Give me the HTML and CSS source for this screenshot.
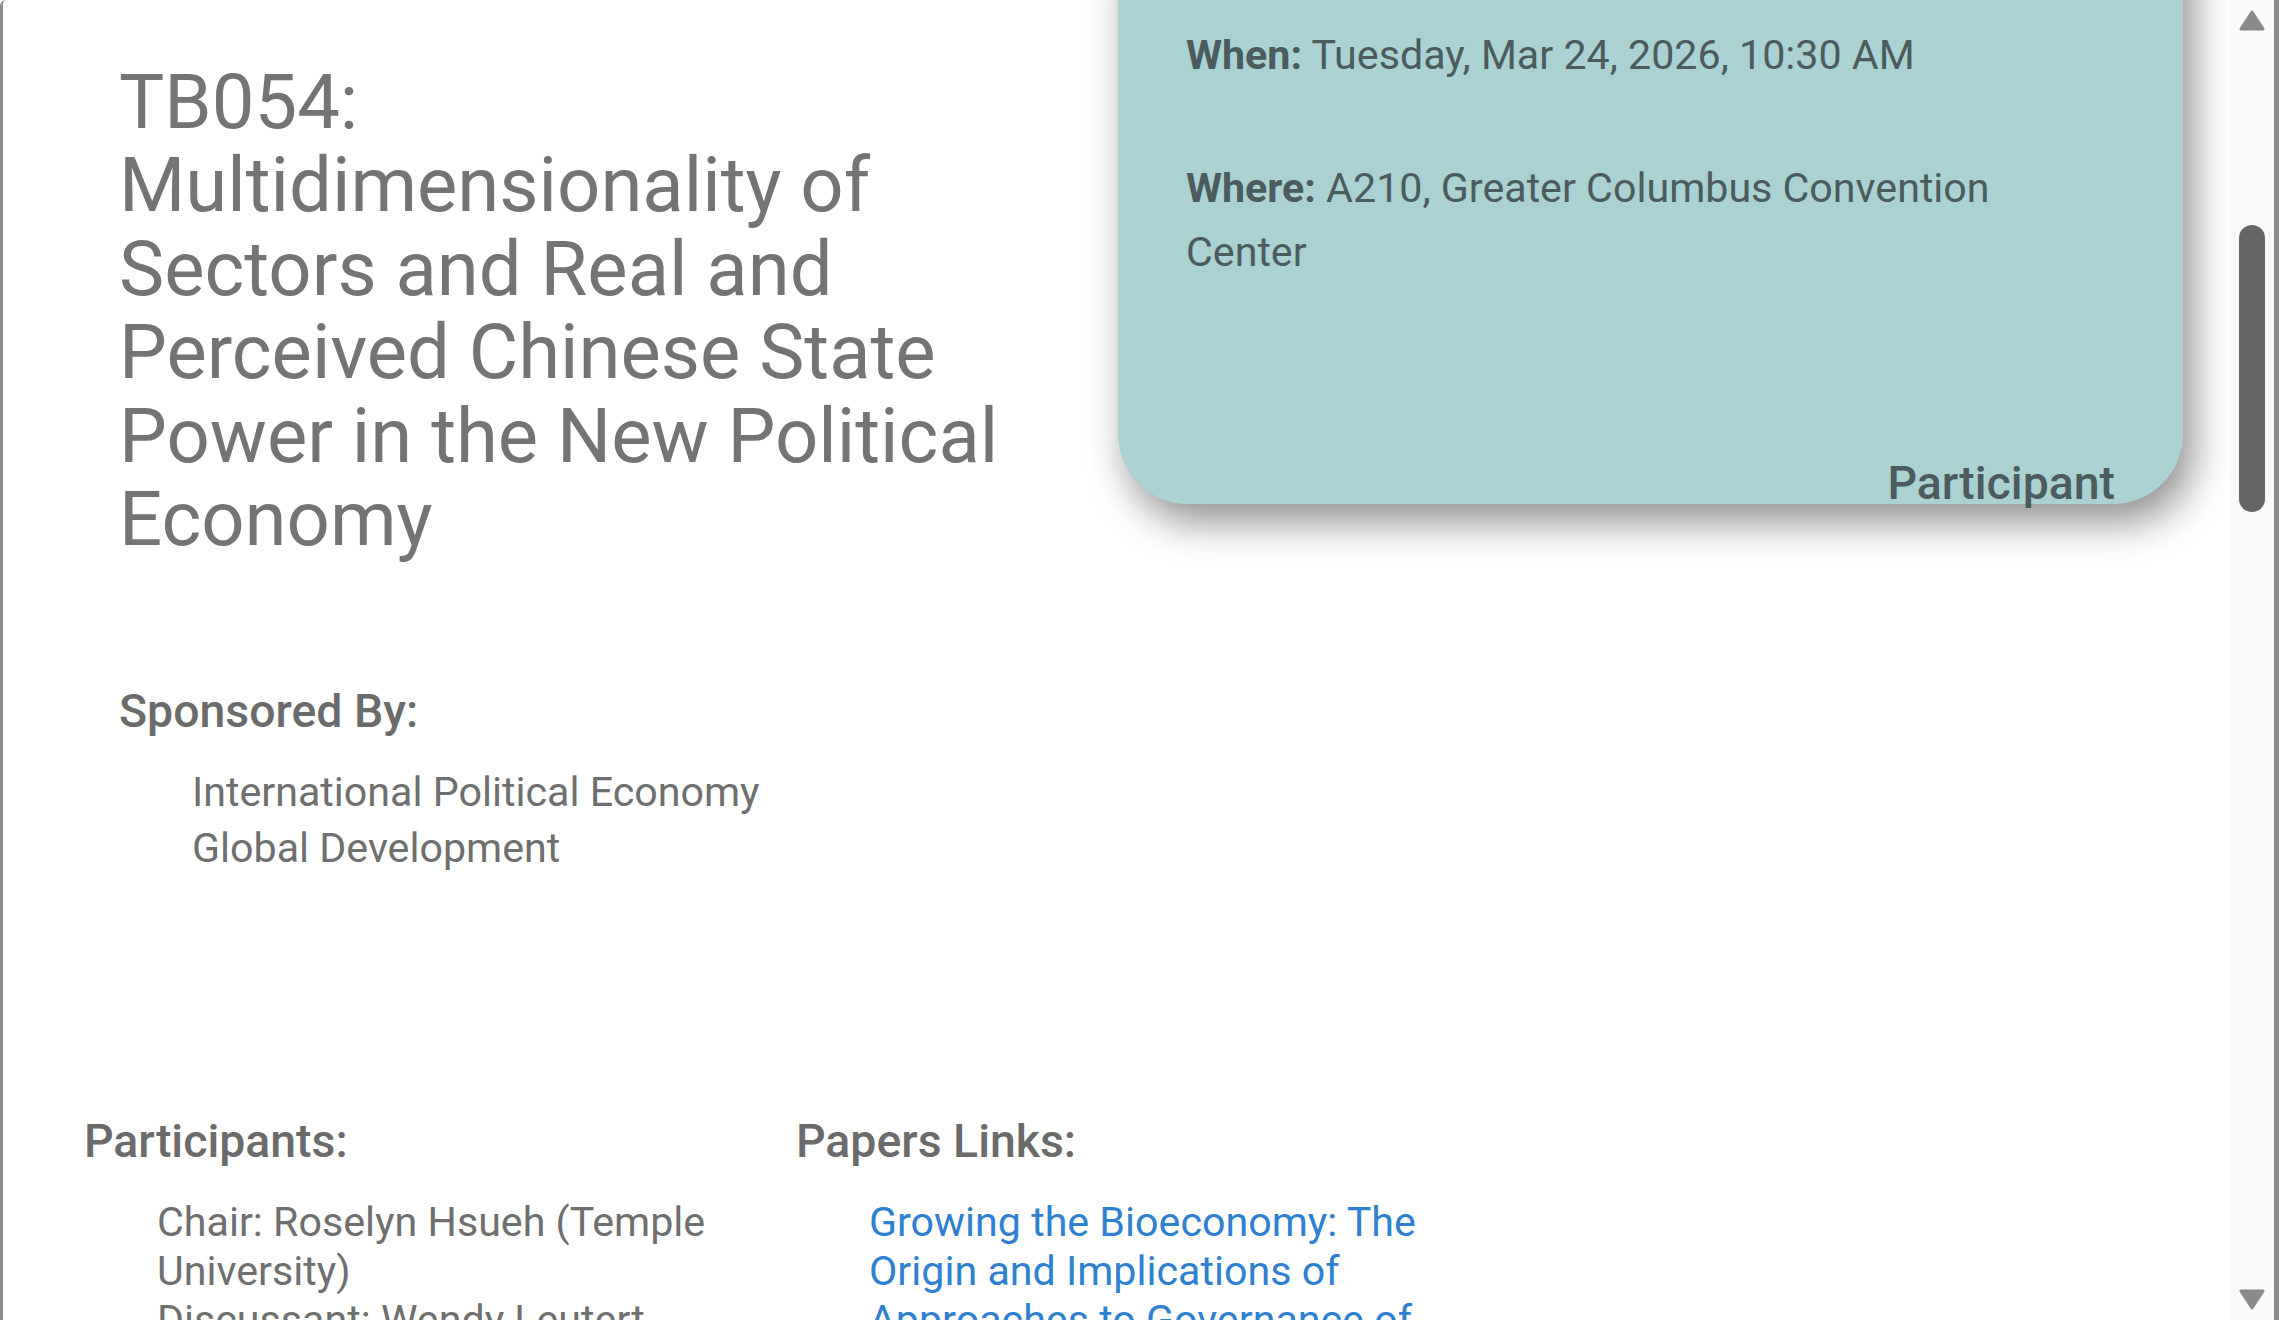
FILE: index.html
```html
<!DOCTYPE html>
<html lang="en">
<head>
<meta charset="utf-8">
<title>TB054 Session</title>
<link rel="stylesheet" href="styles.css">
</head>
<body>
<div class="frame">
  <div class="content">
    <div class="top">
      <h1 class="title">TB054: Multidimensionality of Sectors and Real and Perceived Chinese State Power in the New Political Economy</h1>
      <div class="card">
        <p class="when"><b>When:</b> Tuesday, Mar 24, 2026, 10:30 AM</p>
        <p class="where"><b>Where:</b> A210, Greater Columbus Convention Center</p>
        <div class="role">Participant</div>
      </div>
    </div>
    <section class="sponsors">
      <h2 class="heading">Sponsored By:</h2>
      <ul class="sponsor-list">
        <li>International Political Economy</li>
        <li>Global Development</li>
      </ul>
    </section>
    <section class="people">
      <div class="col">
        <h2 class="heading">Participants:</h2>
        <ul class="plist">
          <li>Chair: Roselyn Hsueh (Temple University)</li>
          <li>Discussant: Wendy Leutert (Indiana University)</li>
        </ul>
      </div>
      <div class="col">
        <h2 class="heading">Papers Links:</h2>
        <ul class="plist">
          <li><a href="#">Growing the Bioeconomy: The Origin and Implications of Approaches to Governance of Biotechnology</a></li>
        </ul>
      </div>
    </section>
  </div>
  <div class="scrollbar">
    <svg class="arrow" width="26" height="21" viewBox="0 0 26 21"><path d="M13 2 L24 19 L2 19 Z" fill="#8a8a8a" stroke="#8a8a8a" stroke-width="3" stroke-linejoin="round"/></svg>
    <div class="thumb"></div>
    <svg class="arrow down" width="26" height="21" viewBox="0 0 26 21"><path d="M2 2 L24 2 L13 19 Z" fill="#8a8a8a" stroke="#8a8a8a" stroke-width="3" stroke-linejoin="round"/></svg>
  </div>
</div>
</body>
</html>
```
FILE: styles.css
```css
html, body {
  margin: 0;
  padding: 0;
  height: 100%;
  overflow: hidden;
  background: #ffffff;
}
body {
  font-family: Roboto, "Liberation Sans", sans-serif;
}
.frame {
  display: flex;
  height: 1320px;
  border-left: 3px solid #8b8b8b;
  border-right: 5px solid #8b8b8b;
  border-top-left-radius: 6px;
  overflow: hidden;
}
.content {
  flex: 1;
  min-width: 0;
  overflow: hidden;
  background: #ffffff;
}
.top {
  display: flex;
  align-items: flex-start;
}
.title {
  margin: 61px 0 0 116px;
  width: 900px;
  font-size: 76px;
  line-height: 83.4px;
  font-weight: 400;
  color: #747474;
}
.card {
  margin: -100px 47px 0 auto;
  width: 1065px;
  height: 604px;
  box-sizing: border-box;
  padding: 123px 68px 0;
  background: #aad2d3;
  border-radius: 70px;
  box-shadow: 10px 18px 40px rgba(0, 0, 0, 0.44);
  display: flex;
  flex-direction: column;
  color: #4b5c5e;
  font-size: 41.2px;
  line-height: 64px;
}
.card p {
  margin: 0;
}
.card b {
  font-weight: 700;
}
.card .where {
  margin-top: 69px;
  max-width: 880px;
}
.role {
  margin-top: auto;
  text-align: right;
  font-size: 46.4px;
  font-weight: 500;
  line-height: 42px;
}
.sponsors {
  margin: 123px 0 0 116px;
}
.heading {
  margin: 0;
  font-size: 46.4px;
  line-height: 54px;
  font-weight: 500;
  color: #6b6b6b;
}
.sponsor-list {
  list-style: none;
  margin: 26px 0 0;
  padding: 0 0 0 73px;
  font-size: 41.2px;
  line-height: 56px;
  color: #6f6f6f;
}
.people {
  margin: 238px 0 0 81px;
  display: grid;
  grid-template-columns: 712px 712px;
}
.plist {
  list-style: none;
  margin: 30px 0 0;
  padding: 0 0 0 73px;
  font-size: 41.2px;
  line-height: 49px;
  color: #6f6f6f;
}
.plist a {
  color: #2f80cf;
  text-decoration: none;
}
.scrollbar {
  width: 44px;
  flex: 0 0 44px;
  background: #f9f9f9;
  display: flex;
  flex-direction: column;
  align-items: center;
}
.arrow {
  display: block;
  margin-top: 10px;
}
.thumb {
  margin-top: 194px;
  width: 26px;
  height: 287px;
  border-radius: 13px;
  background: #666666;
}
.arrow.down {
  margin-top: auto;
  margin-bottom: 10px;
}
```
